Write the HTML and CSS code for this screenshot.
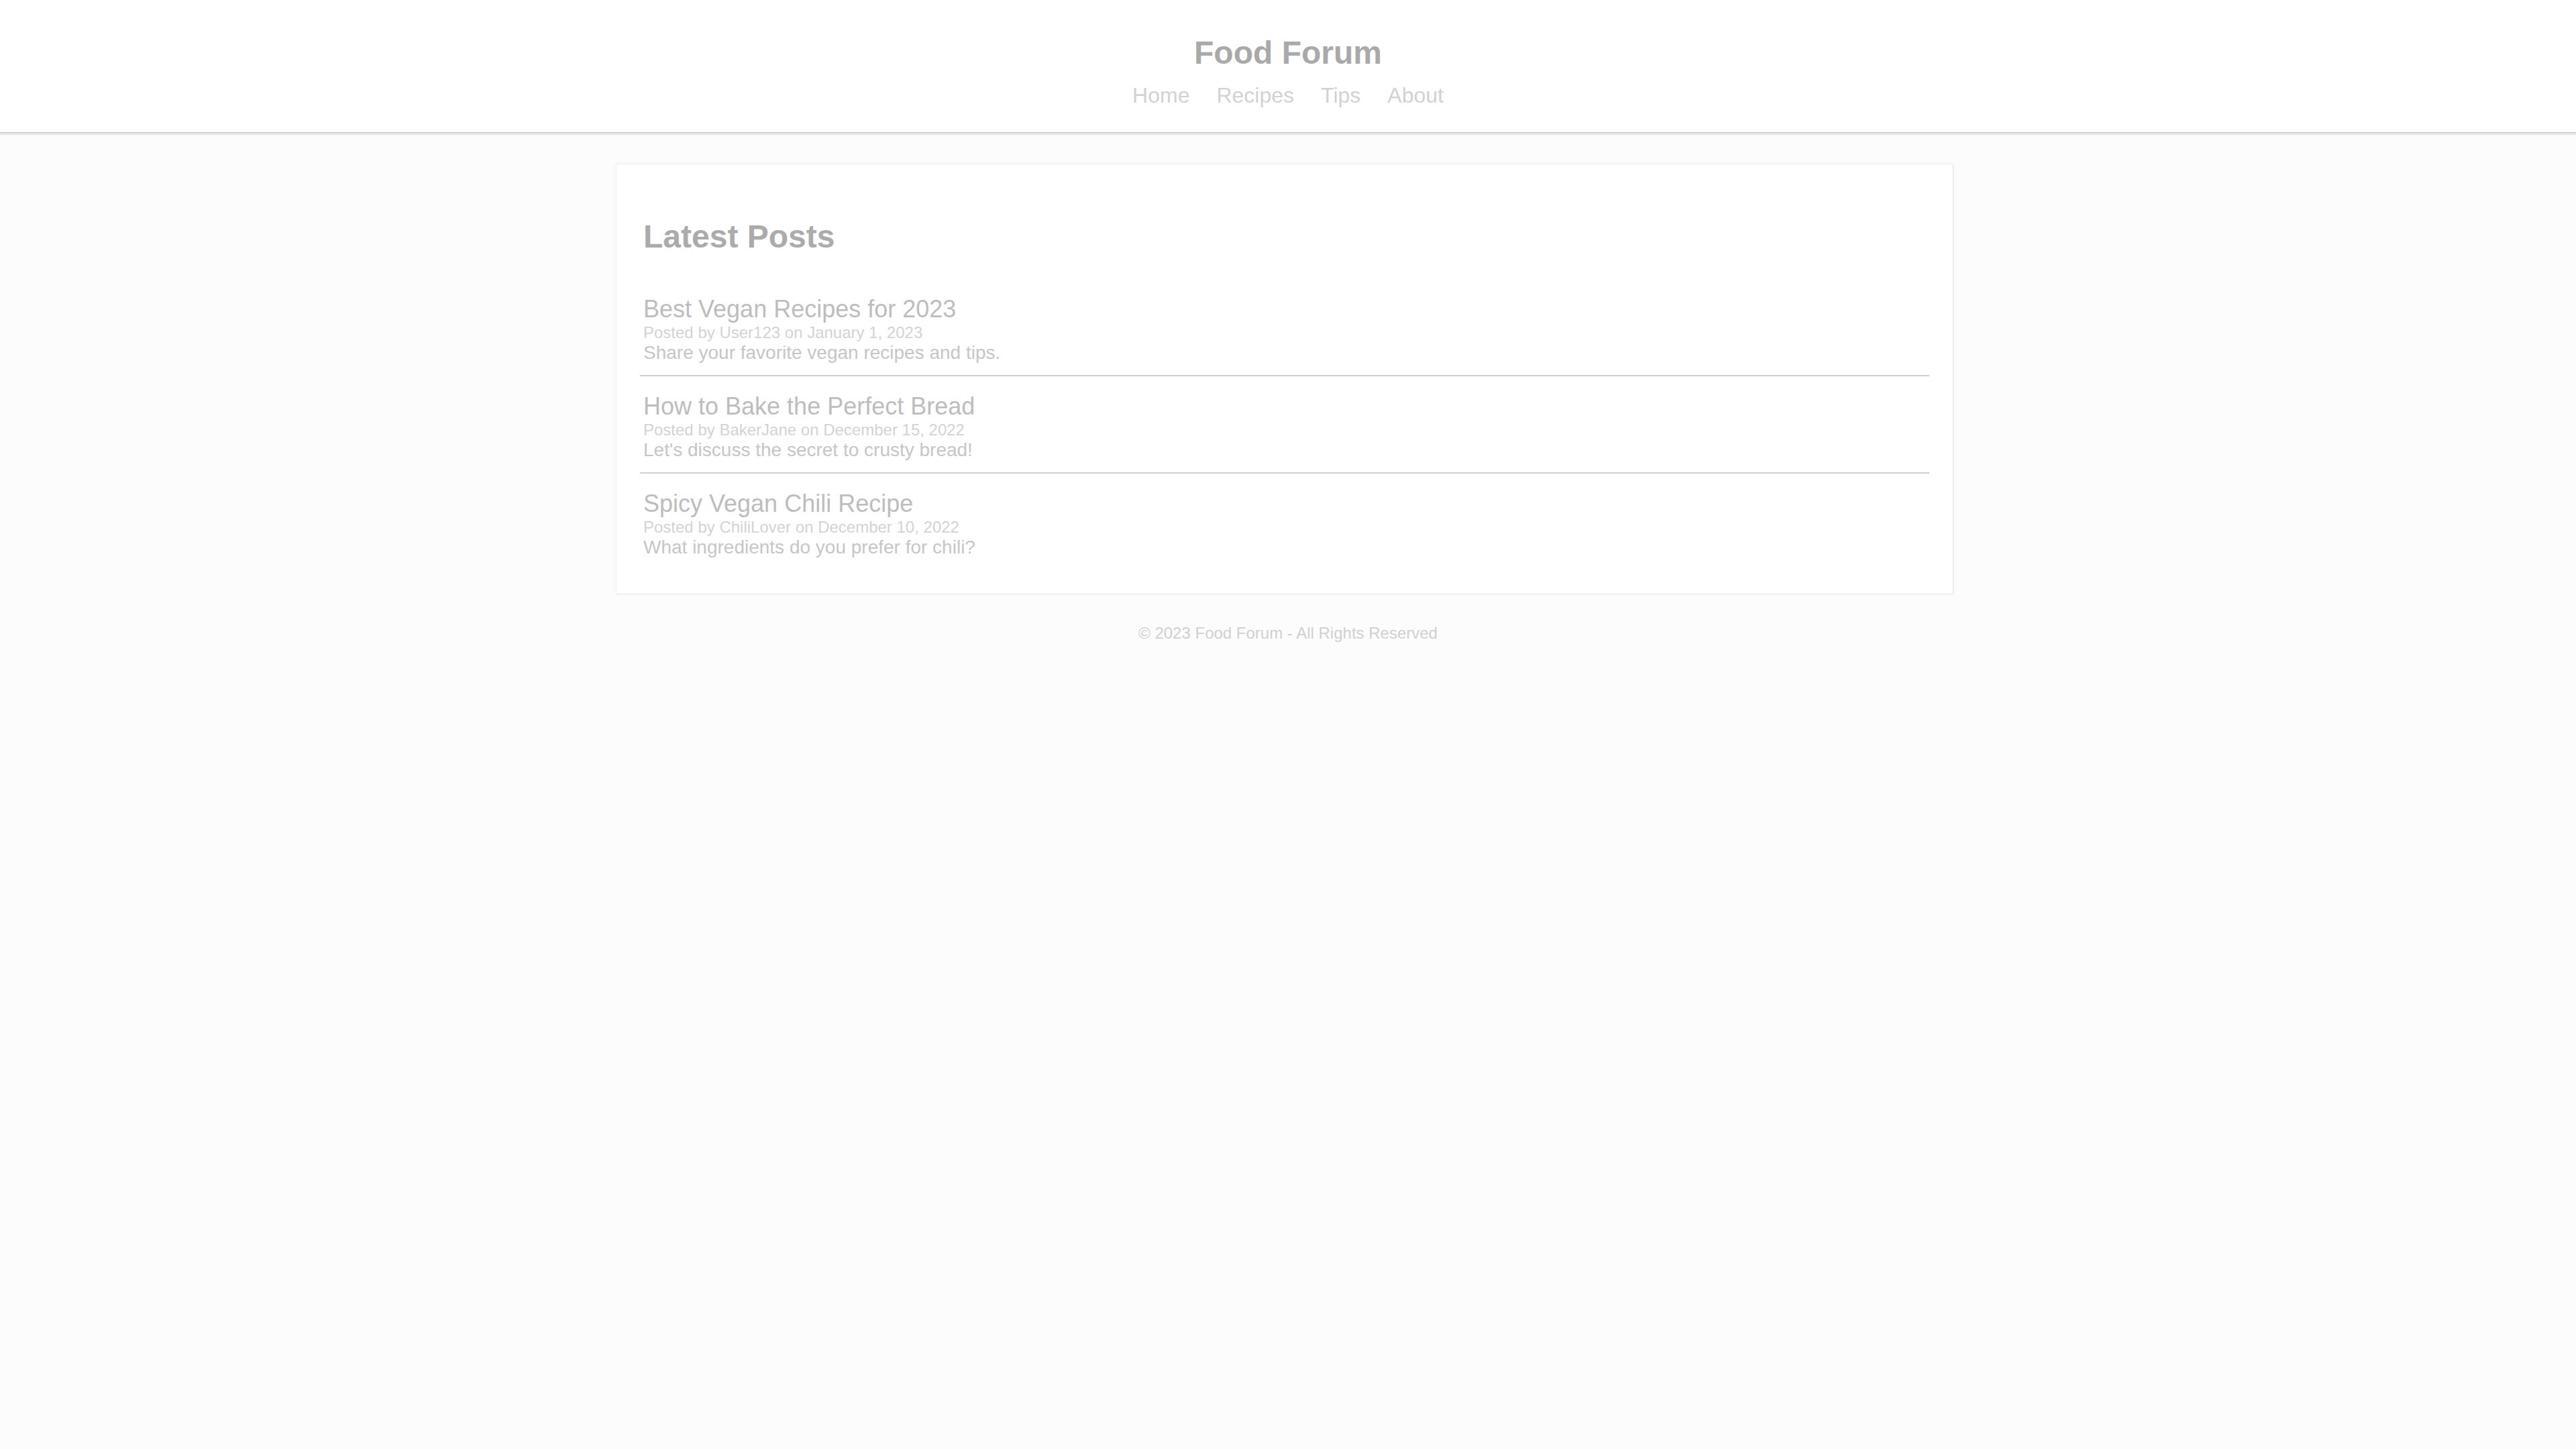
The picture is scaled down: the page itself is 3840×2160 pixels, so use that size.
FILE: index.html
```html
<!DOCTYPE html>
<html lang="en">
<head>
<meta charset="utf-8">
<title>Food Forum</title>
<link rel="stylesheet" href="styles.css">
</head>
<body>
<header class="site-header">
  <h1 class="site-title">Food Forum</h1>
  <nav class="site-nav">
    <a href="#" class="nav-link">Home</a>
    <a href="#" class="nav-link">Recipes</a>
    <a href="#" class="nav-link">Tips</a>
    <a href="#" class="nav-link">About</a>
  </nav>
</header>
<main class="container">
  <h2 class="section-title">Latest Posts</h2>
  <article class="post">
    <h3 class="post-title">Best Vegan Recipes for 2023</h3>
    <p class="post-meta">Posted by User123 on January 1, 2023</p>
    <p class="post-desc">Share your favorite vegan recipes and tips.</p>
  </article>
  <article class="post">
    <h3 class="post-title">How to Bake the Perfect Bread</h3>
    <p class="post-meta">Posted by BakerJane on December 15, 2022</p>
    <p class="post-desc">Let's discuss the secret to crusty bread!</p>
  </article>
  <article class="post">
    <h3 class="post-title">Spicy Vegan Chili Recipe</h3>
    <p class="post-meta">Posted by ChiliLover on December 10, 2022</p>
    <p class="post-desc">What ingredients do you prefer for chili?</p>
  </article>
</main>
<footer class="site-footer">© 2023 Food Forum - All Rights Reserved</footer>
</body>
</html>
```
FILE: styles.css
```css
html, body {
  margin: 0;
  padding: 0;
}
body {
  background: #fcfcfc;
  font-family: "Liberation Sans", Arial, sans-serif;
  color: #c4c4c4;
}
.site-header {
  background: #ffffff;
  padding: 51px 0 36px;
  text-align: center;
  border-bottom: 1px solid #c2c2c2;
  box-shadow: 0 3px 0 #e6e6e6;
}
.site-title {
  margin: 0 0 17.5px;
  font-size: 48px;
  font-weight: bold;
  color: #a9a9a9;
}
.site-nav {
  display: flex;
  justify-content: center;
  gap: 40px;
}
.nav-link {
  font-size: 32px;
  color: #d2d2d2;
  text-decoration: none;
}
.container {
  box-sizing: border-box;
  width: 1994px;
  margin: 46px 0 0 calc(50% - 1002px);
  padding: 39px 35px 36px;
  background: #ffffff;
  border: 1px solid #ededed;
  border-right-color: #e2e2e2;
  border-bottom-color: #e2e2e2;
  box-shadow: 0 0 10px rgba(0, 0, 0, 0.025);
}
.section-title {
  margin: 41px 0 40px;
  padding-left: 5px;
  font-size: 48px;
  font-weight: bold;
  color: #ababab;
}
.post {
  padding: 20px 5px 17px;
  border-bottom: 2px solid #cdcdcd;
  margin-bottom: 4px;
}
.post:last-child {
  border-bottom: none;
  margin-bottom: 0;
}
.post-title {
  margin: 0;
  font-size: 36px;
  font-weight: normal;
  color: #bdbdbd;
}
.post-meta {
  margin: 0;
  font-size: 24px;
  color: #d3d3d3;
}
.post-desc {
  margin: 0;
  font-size: 28px;
  color: #c6c6c6;
}
.site-footer {
  padding: 44px 0;
  text-align: center;
  font-size: 24px;
  color: #d0d0d0;
}
```
